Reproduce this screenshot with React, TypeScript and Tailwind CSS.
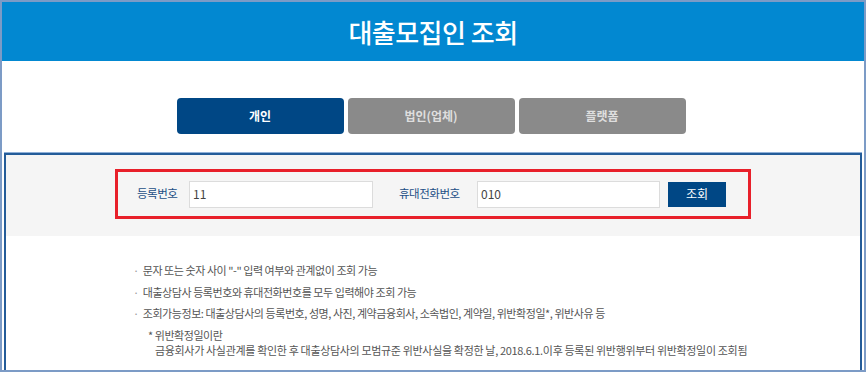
import React from "react";

const font = { fontFamily: '"Noto Sans CJK KR", "Noto Sans", sans-serif' };

export default function App() {
  return (
    <div
      className="w-[866px] h-[372px] overflow-hidden border-2 border-[#7c9bc6] bg-white flex flex-col"
      style={font}
    >
      <div className="h-[59px] shrink-0 bg-[#0288d1] flex items-center justify-center">
        <h1 className="text-white text-[26px] font-medium tracking-[-0.02em] leading-none">
          대출모집인 조회
        </h1>
      </div>
      <div className="pt-[37px] pb-[19px] pr-[4px] flex justify-center gap-[4px]">
        <div className="w-[167px] h-[36px] rounded-[4px] bg-[#004785] text-white text-[12px] font-bold flex items-center justify-center">
          개인
        </div>
        <div className="w-[167px] h-[36px] rounded-[4px] bg-[#8a8a8a] text-[#dedede] text-[12px] font-bold flex items-center justify-center">
          법인(업체)
        </div>
        <div className="w-[167px] h-[36px] rounded-[4px] bg-[#8a8a8a] text-[#dedede] text-[12px] font-bold flex items-center justify-center">
          플랫폼
        </div>
      </div>
      <div className="mx-[2px] flex-1 border-x-2 border-t-2 border-[#245c99] shadow-[0_-1px_0_#8fb0d8]">
        <div className="bg-[#f5f5f5] pt-[14px] pb-[17px] flex justify-center">
          <div className="w-[636px] h-[50px] border-[3px] border-[#e8202a] flex items-center pl-[19px]">
            <span className="w-[52px] shrink-0 text-[11.5px] text-[#1d4f86] tracking-[-0.04em]">등록번호</span>
            <div className="w-[184px] h-[27px] bg-white border border-[#dcdcdc] flex items-center pl-[3px] text-[12px] text-[#444]">
              11
            </div>
            <span className="w-[78px] shrink-0 ml-[26px] text-[11.5px] text-[#1d4f86] tracking-[-0.04em]">휴대전화번호</span>
            <div className="w-[183px] h-[27px] bg-white border border-[#dcdcdc] flex items-center pl-[3px] text-[12px] text-[#444]">
              010
            </div>
            <div className="ml-[8px] w-[58px] h-[25px] bg-[#004785] text-white text-[12px] flex items-center justify-center">
              조회
            </div>
          </div>
        </div>
        <div className="pl-[127px] pt-[29px] text-[11px] text-[#555] tracking-[-0.04em] leading-none">
          <p className="mb-[11px]"><span className="text-[#999] mr-[4px]">·</span>문자 또는 숫자 사이 "-" 입력 여부와 관계없이 조회 가능</p>
          <p className="mb-[10px]"><span className="text-[#999] mr-[4px]">·</span>대출상담사 등록번호와 휴대전화번호를 모두 입력해야 조회 가능</p>
          <p className="mb-[11px]"><span className="text-[#999] mr-[4px]">·</span>조회가능정보: 대출상담사의 등록번호, 성명, 사진, 계약금융회사, 소속법인, 계약일, 위반확정일*, 위반사유 등</p>
          <p className="pl-[15px] mb-[4px]">* 위반확정일이란</p>
          <p className="pl-[22px] tracking-[-0.03em]">금융회사가 사실관계를 확인한 후 대출상담사의 모범규준 위반사실을 확정한 날, 2018.6.1.이후 등록된 위반행위부터 위반확정일이 조회됨</p>
        </div>
      </div>
    </div>
  );
}
